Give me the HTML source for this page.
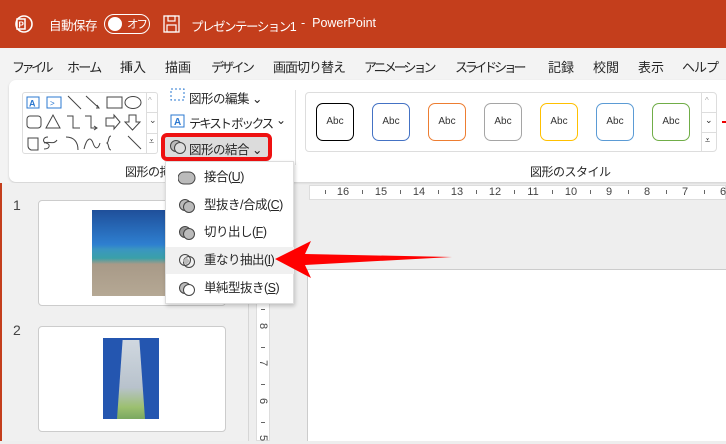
<!DOCTYPE html>
<html><head><meta charset="utf-8"><style>
*{margin:0;padding:0;box-sizing:border-box}
body{width:726px;height:441px;overflow:hidden;position:relative;background:#eeeeee;font-family:"Liberation Sans","Noto Sans CJK JP",sans-serif;color:#262626}
.a{position:absolute}
.t{font-size:13px;white-space:nowrap}
.abc{position:absolute;top:103px;width:38px;height:38px;border:1.5px solid;border-radius:7px;font-size:10px;color:#333;text-align:center;line-height:35px;background:#fff}
.mi{position:absolute;left:0;width:128px;height:27px;font-size:12.5px;line-height:27px;padding-left:38px;letter-spacing:-0.5px}
.ic{position:absolute;left:12px;top:6px}
u{text-decoration:underline}
.rn{position:absolute;top:186px;font-size:11px;color:#444;width:20px;margin-left:-10px;text-align:center}
.rt{position:absolute;top:190px;width:1px;height:4px;background:#666}
.vn{position:absolute;left:257px;font-size:11px;color:#444;transform:rotate(90deg);width:12px;text-align:center}
.vt{position:absolute;left:261px;width:4px;height:1px;background:#666}
</style></head><body>
<!-- title bar -->
<div class="a" style="left:0;top:0;width:726px;height:48px;background:#c43e1c"></div>
<svg class="a" style="left:14px;top:14px" width="20" height="20" viewBox="0 0 20 20"><circle cx="10" cy="10" r="8" fill="none" stroke="#fff" stroke-width="1.6"/><rect x="3" y="5" width="8" height="10" fill="#c43e1c" stroke="#fff" stroke-width="1.5"/><text x="4.5" y="13.5" font-size="8" fill="#fff" font-family="Liberation Sans" font-weight="bold">P</text></svg>
<div class="a t" style="left:49px;top:15px;color:#fff;font-size:12.5px;letter-spacing:-0.5px">自動保存</div>
<div class="a" style="left:104px;top:14px;width:46px;height:20px;border:1.5px solid #fff;border-radius:10px"></div>
<div class="a" style="left:108px;top:17px;width:14px;height:14px;border-radius:50%;background:#fff"></div>
<div class="a t" style="left:127px;top:16px;color:#fff;font-size:11.5px;letter-spacing:-2px">オフ</div>
<svg class="a" style="left:163px;top:15px" width="17" height="18"><rect x="1" y="1" width="15" height="16" fill="none" stroke="#fff" stroke-width="1.3"/><rect x="5" y="1" width="7" height="5" fill="none" stroke="#fff" stroke-width="1.2"/><rect x="4" y="10" width="9" height="7" fill="none" stroke="#fff" stroke-width="1.2"/></svg>
<div class="a t" style="left:191px;top:16px;color:#fff;font-size:12.5px;letter-spacing:-1.5px">プレゼンテーション1</div>
<div class="a t" style="left:301px;top:16px;color:#fff;font-size:12.5px">- &nbsp;PowerPoint</div>
<!-- tabs -->
<div class="a" style="left:0;top:48px;width:726px;height:33px;background:#f3f3f3"></div>
<div class="a t" style="top:57px;left:12px;letter-spacing:-3.5px">ファイル</div>
<div class="a t" style="top:57px;left:67px;letter-spacing:-1.7px">ホーム</div>
<div class="a t" style="top:57px;left:120px">挿入</div>
<div class="a t" style="top:57px;left:165px">描画</div>
<div class="a t" style="top:57px;left:211px;letter-spacing:-2.7px">デザイン</div>
<div class="a t" style="top:57px;left:273px;letter-spacing:-1px">画面切り替え</div>
<div class="a t" style="top:57px;left:364px;letter-spacing:-3px">アニメーション</div>
<div class="a t" style="top:57px;left:455px;letter-spacing:-3.3px">スライド ショー</div>
<div class="a t" style="top:57px;left:548px">記録</div>
<div class="a t" style="top:57px;left:593px">校閲</div>
<div class="a t" style="top:57px;left:638px">表示</div>
<div class="a t" style="top:57px;left:682px;letter-spacing:-1px">ヘルプ</div>
<!-- ribbon -->
<div class="a" style="left:0;top:81px;width:726px;height:102px;background:#f3f3f3"></div>
<div class="a" style="left:9px;top:80px;width:730px;height:102px;background:#fff;border-radius:7px;box-shadow:0 1px 2px #ccc"></div>
<!-- shapes gallery -->
<div class="a" style="left:22px;top:92px;width:136px;height:62px;border:1px solid #ddd;border-radius:3px"></div>
<svg class="a" style="left:24px;top:93px" width="124" height="60" fill="none" stroke="#444" stroke-width="1">
<rect x="3" y="4" width="12" height="11" stroke="#2b78d0"/><text x="5" y="13.5" font-size="9" fill="#2b78d0" stroke="none" font-family="Liberation Sans" font-weight="bold">A</text>
<rect x="23" y="4" width="14" height="11" stroke="#2b78d0"/><text x="26" y="13" font-size="8" fill="#2b78d0" stroke="none" font-family="Liberation Sans">&gt;</text>
<path d="M44 3l13 13M62 3l13 12M73 12l2 3-3 0"/><rect x="83" y="4" width="15" height="11"/><ellipse cx="109" cy="9.5" rx="8" ry="6"/>
<rect x="3" y="23" width="14" height="12" rx="3"/><path d="M22 35l7-13 7 13z"/><path d="M43 23h6v12h7M61 23h6v12h6M70 33l3 2-3 2"/><path d="M82 25h8v-3l6 7-6 7v-3h-8z"/><path d="M105 22h7v7h4l-7.5 8-7.5-8h4z"/>
<path d="M4 45h10v12H7a5 5 0 0 1-3-5z"/><path d="M24 44c-5 0-6 5-2 6 5 1 4 6-2 6M20 50c5-2 10 2 13-3"/><path d="M42 44c8 0 12 5 12 13"/><path d="M60 56c3-12 7-12 9-6s5 7 7 0"/><path d="M87 43c-3 0-2 6-4 7 2 1 1 7 4 7"/><path d="M104 43l13 13"/>
</svg>
<div class="a" style="left:146px;top:92px;width:12px;height:62px;border-left:1px solid #ddd"></div>
<div class="a" style="left:146px;top:112px;width:12px;height:1px;background:#ddd"></div>
<div class="a" style="left:146px;top:133px;width:12px;height:1px;background:#ddd"></div>
<div class="a" style="left:148px;top:96px;font-size:8px;color:#aaa">^</div>
<div class="a" style="left:149px;top:115px;font-size:9px;color:#444">⌄</div>
<div class="a" style="left:149px;top:136px;font-size:9px;color:#444">⩡</div>
<div class="a t" style="left:125px;top:163px;font-size:12px;letter-spacing:-0.5px">図形の挿</div>
<!-- edit buttons -->
<svg class="a" style="left:170px;top:88px" width="16" height="14" fill="none" stroke="#2b78d0" stroke-dasharray="2 2"><rect x="1" y="1" width="13" height="11"/></svg>
<div class="a t" style="left:189px;top:88px;font-size:12.5px;letter-spacing:-0.5px">図形の編集 ⌄</div>
<svg class="a" style="left:170px;top:113px" width="16" height="16"><rect x="1" y="2" width="13" height="12" fill="none" stroke="#2b78d0"/><text x="4" y="12" font-size="10" fill="#2b78d0" font-family="Liberation Sans" font-weight="bold">A</text></svg>
<div class="a t" style="left:189px;top:113px;font-size:12.5px;letter-spacing:-2.2px">テキスト ボックス</div>
<div class="a t" style="left:276px;top:113px;font-size:12px">⌄</div>
<div class="a" style="left:161px;top:133px;width:111px;height:28px;border:4px solid #ee1111;border-radius:6px;background:#dcdcdc"></div>
<svg class="a" style="left:169px;top:139px" width="18" height="16" fill="#bbb" stroke="#444"><circle cx="7" cy="7" r="5.5"/><circle cx="11" cy="9" r="5.5" fill="#ddd"/></svg>
<div class="a t" style="left:189px;top:139px;font-size:12.5px;letter-spacing:-0.5px">図形の結合 ⌄</div>
<div class="a" style="left:295px;top:90px;width:1px;height:75px;background:#e0e0e0"></div>
<!-- styles -->
<div class="a" style="left:305px;top:92px;width:412px;height:60px;border:1px solid #ddd;border-radius:4px"></div>
<div class="abc" style="left:316px;border-color:#000;border-width:1.5px">Abc</div>
<div class="abc" style="left:372px;border-color:#4472c4">Abc</div>
<div class="abc" style="left:428px;border-color:#ed7d31">Abc</div>
<div class="abc" style="left:484px;border-color:#a5a5a5">Abc</div>
<div class="abc" style="left:540px;border-color:#ffc000">Abc</div>
<div class="abc" style="left:596px;border-color:#5b9bd5">Abc</div>
<div class="abc" style="left:652px;border-color:#70ad47">Abc</div>
<div class="a" style="left:701px;top:92px;width:16px;height:60px;border-left:1px solid #ddd"></div>
<div class="a" style="left:701px;top:112px;width:16px;height:1px;background:#ddd"></div>
<div class="a" style="left:701px;top:132px;width:16px;height:1px;background:#ddd"></div>
<div class="a" style="left:705px;top:96px;font-size:8px;color:#aaa">^</div>
<div class="a" style="left:705px;top:115px;font-size:9px">⌄</div>
<div class="a" style="left:705px;top:135px;font-size:9px">⩡</div>
<div class="a" style="left:722px;top:121px;width:4px;height:2px;background:#e00"></div>
<div class="a t" style="left:530px;top:163px;font-size:12px;letter-spacing:-0.5px">図形のスタイル</div>
<!-- left pane -->
<div class="a" style="left:0;top:183px;width:248px;height:258px;background:#f0f0f0"></div>
<div class="a" style="left:0;top:183px;width:2px;height:258px;background:#c43e1c"></div>
<div class="a" style="left:248px;top:183px;width:1px;height:258px;background:#d6d6d6"></div>
<div class="a t" style="left:13px;top:197px;font-size:14px;color:#444">1</div>
<div class="a" style="left:38px;top:200px;width:188px;height:106px;background:#fff;border:1px solid #ccc;border-radius:4px"></div>
<div class="a" style="left:92px;top:210px;width:75px;height:86px;background:linear-gradient(#1f4f9a 0%,#2e7fd0 40%,#3a96c0 46%,#3aa0a8 56%,#a89a88 63%,#b5a894 100%)"></div>
<div class="a t" style="left:13px;top:322px;font-size:14px;color:#444">2</div>
<div class="a" style="left:38px;top:326px;width:188px;height:106px;background:#fff;border:1px solid #ccc;border-radius:4px"></div>
<div class="a" style="left:103px;top:338px;width:56px;height:81px;background:#2456b0"></div>
<div class="a" style="left:117px;top:340px;width:28px;height:79px;background:linear-gradient(#d0d8e0,#b8c2cc 60%,#9cc070 85%,#7aa860);clip-path:polygon(20% 0,80% 0,100% 100%,0 100%)"></div>
<!-- rulers -->
<div class="a" style="left:309px;top:185px;width:417px;height:15px;background:#fff;border:1px solid #ddd"></div>
<div class="rn" style="left:343px">16</div><div class="rn" style="left:381px">15</div><div class="rn" style="left:419px">14</div><div class="rn" style="left:457px">13</div><div class="rn" style="left:495px">12</div><div class="rn" style="left:533px">11</div><div class="rn" style="left:571px">10</div><div class="rn" style="left:609px">9</div><div class="rn" style="left:647px">8</div><div class="rn" style="left:685px">7</div><div class="rn" style="left:723px">6</div>
<div class="rt" style="left:325px"></div><div class="rt" style="left:362px"></div><div class="rt" style="left:400px"></div><div class="rt" style="left:438px"></div><div class="rt" style="left:476px"></div><div class="rt" style="left:514px"></div><div class="rt" style="left:552px"></div><div class="rt" style="left:590px"></div><div class="rt" style="left:628px"></div><div class="rt" style="left:666px"></div><div class="rt" style="left:704px"></div>
<div class="a" style="left:256px;top:200px;width:14px;height:241px;background:#fff;border:1px solid #ddd"></div>
<div class="vn" style="top:320px">8</div><div class="vn" style="top:357px">7</div><div class="vn" style="top:395px">6</div><div class="vn" style="top:432px">5</div>
<div class="vt" style="top:309px"></div><div class="vt" style="top:347px"></div><div class="vt" style="top:384px"></div><div class="vt" style="top:422px"></div>
<div class="a" style="left:307px;top:269px;width:419px;height:172px;background:#fff;border-left:1px solid #ccc;border-top:1px solid #ccc"></div>
<!-- dropdown -->
<div class="a" style="left:165px;top:161px;width:129px;height:143px;background:#fff;border:1px solid #ddd;box-shadow:1px 2px 4px rgba(0,0,0,.2)">
<div class="mi" style="top:2px"><svg class="ic" width="18" height="16"><path d="M6 2h5a5 5 0 0 1 0 12H6A5 5 0 0 1 6 2z" fill="#bbb" stroke="#444"/></svg>接合(<u>U</u>)</div>
<div class="mi" style="top:30px"><svg class="ic" width="18" height="16" stroke="#444"><circle cx="7" cy="7" r="5.5" fill="#bbb"/><circle cx="11" cy="9" r="5.5" fill="#bbb"/></svg>型抜き/合成(<u>C</u>)</div>
<div class="mi" style="top:57px"><svg class="ic" width="18" height="16" stroke="#444"><circle cx="7" cy="7" r="5.5" fill="#999"/><circle cx="11" cy="9" r="5.5" fill="#bbb"/></svg>切り出し(<u>F</u>)</div>
<div class="mi" style="top:85px;background:#f0f0f0"><svg class="ic" width="18" height="16" stroke="#444" fill="none"><circle cx="7" cy="7" r="5.5"/><circle cx="11" cy="9" r="5.5"/><path d="M8 4l4 4-4 4-3-4z" fill="#bbb" stroke="none"/></svg>重なり抽出(<u>I</u>)</div>
<div class="mi" style="top:113px"><svg class="ic" width="18" height="16" stroke="#444"><circle cx="7" cy="7" r="5.5" fill="#bbb"/><circle cx="11" cy="9" r="5.5" fill="#fff"/></svg>単純型抜き(<u>S</u>)</div>
</div>
<!-- arrow -->
<svg class="a" style="left:270px;top:236px" width="190" height="48"><path d="M5 23L41 5 35 18 182 21 35 29 41 42z" fill="#ff0000"/></svg>
</body></html>
